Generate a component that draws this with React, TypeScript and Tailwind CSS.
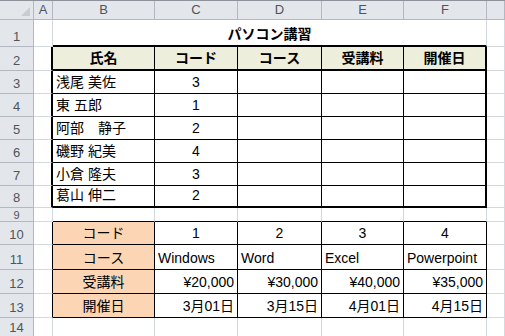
import React from "react";

type Align = "left" | "center" | "right";

interface Cell {
  text?: string;
  align?: Align;
  bold?: boolean;
  bg?: string;
  span?: number;
}

const ROW_HEIGHTS = [27, 24, 23, 23, 23, 23, 23, 22, 14, 23, 25, 24, 24, 20];
const COL_LETTERS = ["A", "B", "C", "D", "E", "F", ""];

const HEAD = "bg-[#edeedb]";
const ORANGE = "bg-[#fcd5b4]";

// rows 1..14, columns A..G
const SHEET: Record<number, Record<number, Cell>> = {
  1: { 2: { text: "パソコン講習", align: "center", bold: true, span: 5 } },
  2: {
    2: { text: "氏名", align: "center", bold: true, bg: HEAD },
    3: { text: "コード", align: "center", bold: true, bg: HEAD },
    4: { text: "コース", align: "center", bold: true, bg: HEAD },
    5: { text: "受講料", align: "center", bold: true, bg: HEAD },
    6: { text: "開催日", align: "center", bold: true, bg: HEAD },
  },
  3: { 2: { text: "浅尾 美佐" }, 3: { text: "3", align: "center" } },
  4: { 2: { text: "東 五郎" }, 3: { text: "1", align: "center" } },
  5: { 2: { text: "阿部　静子" }, 3: { text: "2", align: "center" } },
  6: { 2: { text: "磯野 紀美" }, 3: { text: "4", align: "center" } },
  7: { 2: { text: "小倉 隆夫" }, 3: { text: "3", align: "center" } },
  8: { 2: { text: "葛山 伸二" }, 3: { text: "2", align: "center" } },
  10: {
    2: { text: "コード", align: "center", bg: ORANGE },
    3: { text: "1", align: "center" },
    4: { text: "2", align: "center" },
    5: { text: "3", align: "center" },
    6: { text: "4", align: "center" },
  },
  11: {
    2: { text: "コース", align: "center", bg: ORANGE },
    3: { text: "Windows" },
    4: { text: "Word" },
    5: { text: "Excel" },
    6: { text: "Powerpoint" },
  },
  12: {
    2: { text: "受講料", align: "center", bg: ORANGE },
    3: { text: "¥20,000", align: "right" },
    4: { text: "¥30,000", align: "right" },
    5: { text: "¥40,000", align: "right" },
    6: { text: "¥35,000", align: "right" },
  },
  13: {
    2: { text: "開催日", align: "center", bg: ORANGE },
    3: { text: "3月01日", align: "right" },
    4: { text: "3月15日", align: "right" },
    5: { text: "4月01日", align: "right" },
    6: { text: "4月15日", align: "right" },
  },
};

const inTable1 = (r: number) => r >= 2 && r <= 8;
const inTable2 = (r: number) => r >= 10 && r <= 13;

function rightBorder(r: number, c: number) {
  if (inTable1(r) && (c === 1 || c === 6)) return "border-r-2 border-r-black";
  if (inTable1(r) && c >= 2 && c <= 5) return "border-r border-r-black";
  if (inTable2(r) && c >= 1 && c <= 6) return "border-r border-r-black";
  return "border-r border-r-[#d4d8df]";
}

function bottomBorder(r: number, c: number) {
  const inCols = c >= 2 && c <= 6;
  if (inCols && (r === 1 || r === 2 || r === 8)) return "border-b-2 border-b-black";
  if (inCols && r >= 3 && r <= 7) return "border-b border-b-black";
  if (inCols && r >= 9 && r <= 13) return "border-b border-b-black";
  return "border-b border-b-[#d4d8df]";
}

const alignClass: Record<Align, string> = {
  left: "justify-start pl-[3px]",
  center: "justify-center",
  right: "justify-end pr-[3px]",
};

export default function App() {
  const rows = ROW_HEIGHTS.map((_, i) => i + 1);

  return (
    <div
      className="w-[505px] h-[336px] overflow-hidden bg-white border-t border-t-[#8d9199] text-[14px] text-black"
      style={{ fontFamily: '"Liberation Sans", "Noto Sans CJK JP", sans-serif' }}
    >
      <div className="grid grid-cols-[34px_19px_102px_83px_84px_82px_83px_1fr]">
        {/* column header row */}
        <div className="h-[19px] bg-[#e3e7ec] border-r border-b border-[#b3b8c0] flex items-end justify-end p-[3px]">
          <svg width="9" height="9" viewBox="0 0 9 9">
            <polygon points="9,0 9,9 0,9" fill="#c9ccd1" />
          </svg>
        </div>
        {COL_LETTERS.map((l, i) => (
          <div
            key={i}
            className="h-[19px] bg-[#e3e7ec] border-r border-b border-[#b3b8c0] flex items-center justify-center text-[13px] text-[#50545a]"
          >
            {l}
          </div>
        ))}

        {rows.map((r) => {
          const h = ROW_HEIGHTS[r - 1];
          const cells: React.ReactNode[] = [];
          cells.push(
            <div
              key="h"
              className={[
                "bg-[#e3e7ec] border-r border-b border-[#b3b8c0] flex items-end justify-center overflow-hidden leading-none text-[#50545a]",
                h < 16 ? "text-[11px] pb-0" : "text-[13px] pb-[3px]",
              ].join(" ")}
              style={{ height: h }}
            >
              {r}
            </div>
          );
          for (let c = 1; c <= 7; c++) {
            const cell = SHEET[r]?.[c];
            const span = cell?.span ?? 1;
            const lastCol = c + span - 1;
            cells.push(
              <div
                key={c}
                className={[
                  "flex items-end overflow-hidden whitespace-nowrap leading-none pb-[4px]",
                  rightBorder(r, lastCol),
                  bottomBorder(r, c),
                  cell?.bg ?? "bg-white",
                  alignClass[cell?.align ?? "left"],
                  cell?.bold ? "font-bold" : "",
                  span === 5 ? "col-span-5" : "",
                ].join(" ")}
                style={{ height: h }}
              >
                {cell?.text}
              </div>
            );
            c = lastCol;
          }
          return cells;
        })}
      </div>
    </div>
  );
}
